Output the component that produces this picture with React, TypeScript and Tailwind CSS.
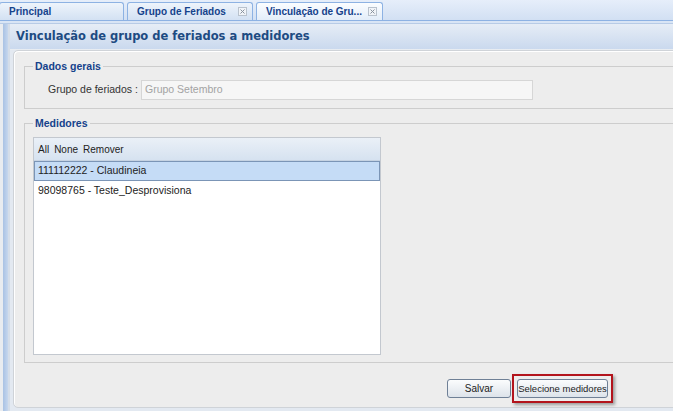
import React from "react";

function CloseIcon() {
  return (
    <svg width="9" height="9" viewBox="0 0 9 9" className="shrink-0">
      <rect x="0.5" y="0.5" width="8" height="8" fill="#f1f4f8" stroke="#b9c2cd" />
      <path d="M2.5 2.5 L6.5 6.5 M6.5 2.5 L2.5 6.5" stroke="#8a939e" strokeWidth="1" />
    </svg>
  );
}

function Tab({ label, width, active, closable }: { label: string; width: string; active?: boolean; closable?: boolean }) {
  return (
    <div
      className={
        "h-[18px] flex items-center pl-[9px] pr-[5px] rounded-t-[3px] border border-b-0 border-[#8db2e3] " +
        width +
        (active
          ? " bg-gradient-to-b from-[#fbfdff] to-[#e3edf9]"
          : " bg-gradient-to-b from-[#eef4fb] to-[#d3e1f3]")
      }
    >
      <span className="flex-1 text-[10px] font-bold text-[#15428b] whitespace-nowrap">{label}</span>
      {closable && <CloseIcon />}
    </div>
  );
}

export default function App() {
  return (
    <div className="w-[673px] h-[411px] overflow-hidden bg-[#dfe8f6] font-['Liberation_Sans',Arial,sans-serif] text-[#222]">
      {/* Tab strip */}
      <div className="h-[21px] flex items-end gap-[3px] bg-gradient-to-b from-[#e6eefa] to-[#d2e0f3] border-b border-[#8db2e3]">
        <Tab label="Principal" width="w-[125px] -ml-px" />
        <Tab label="Grupo de Feriados" width="w-[126px]" closable />
        <Tab label="Vinculação de Gru..." width="w-[127px]" active closable />
      </div>
      <div className="h-[3px] bg-[#d9e5f5] border-b border-[#b7cbe6]" />

      <div className="flex h-[387px]">
        {/* left strip */}
        <div className="w-[3px] bg-[#e9ecf0]" />
        <div className="w-[5px] bg-gradient-to-r from-[#a9c2e4] to-[#c6d7ee]" />
        <div className="w-[2px] bg-[#d4dde9]" />

        <div className="flex-1 flex flex-col min-w-0">
          {/* header */}
          <div className="h-[26px] shrink-0 flex items-center pl-[6px] bg-gradient-to-b from-[#e6edf6] to-[#cad9ee] border-b border-[#e8ecf1]">
            <span className="font-['DejaVu_Sans',Verdana,sans-serif] font-bold text-[11.5px] text-[#1d4b82] whitespace-nowrap">
              Vinculação de grupo de feriados a medidores
            </span>
          </div>

          <div className="flex-1 pl-[3px] bg-[#e3e9f1]">
            <div className="w-[710px] h-[358px] bg-[#ededed] border border-[#cfd3d8] rounded-tl-[5px] rounded-bl-[5px] shadow-[inset_1px_1px_0_#ffffff] pt-[9px] pl-[10px] flex flex-col">
              {/* Dados gerais */}
              <fieldset className="w-[690px] border border-[#cdcdcd] px-[8px] pb-[8px]">
                <legend className="px-[2px] text-[10.5px] leading-[12px] font-bold text-[#15428b]">Dados gerais</legend>
                <div className="flex items-center pt-[8px] pl-[15px]">
                  <span className="text-[10.5px] text-[#333] w-[93px] whitespace-nowrap">Grupo de feriados :</span>
                  <div className="w-[392px] h-[20px] bg-[#f6f6f6] border border-[#d6d6d6] flex items-center pl-[3px]">
                    <span className="text-[10.5px] text-[#a3a3a3]">Grupo Setembro</span>
                  </div>
                </div>
              </fieldset>

              {/* Medidores */}
              <fieldset className="w-[690px] mt-[8px] border border-[#cdcdcd] px-[8px] pb-[7px]">
                <legend className="px-[2px] text-[10.5px] leading-[12px] font-bold text-[#15428b]">Medidores</legend>
                <div className="mt-[8px] w-[348px] h-[218px] bg-white border border-[#c3c8cf] flex flex-col">
                  <div className="h-[23px] flex items-center gap-[5px] pl-[4px] bg-gradient-to-b from-[#eaf0f7] to-[#d6e2f0] border-b border-[#c6d3e2]">
                    <span className="text-[10px] text-[#222]">All</span>
                    <span className="text-[10px] text-[#222]">None</span>
                    <span className="text-[10px] text-[#222]">Remover</span>
                  </div>
                  <div className="h-[20px] flex items-center pl-[3px] bg-[#c5dcf6] border border-[#7b95b6]">
                    <span className="text-[10.5px] text-[#222]">111112222 - Claudineia</span>
                  </div>
                  <div className="h-[19px] flex items-center pl-[4px]">
                    <span className="text-[10.5px] text-[#222]">98098765 - Teste_Desprovisiona</span>
                  </div>
                </div>
              </fieldset>

              {/* Buttons */}
              <div className="mt-[11px] flex items-center pl-[423px] gap-[1px]">
                <button className="w-[64px] h-[19px] rounded-[3px] border border-[#6f8096] bg-gradient-to-b from-[#fbfcfd] to-[#dde3ea] text-[10px] leading-[17px] text-[#222]">
                  Salvar
                </button>
                <div className="border-2 border-[#b3141c] p-[3px] shadow-[2px_2px_3px_rgba(0,0,0,0.35)]">
                  <button className="block w-[91px] h-[19px] rounded-[3px] border border-[#6f8096] bg-gradient-to-b from-[#fbfcfd] to-[#dde3ea] text-[9.5px] leading-[17px] text-[#222] whitespace-nowrap">
                    Selecione medidores
                  </button>
                </div>
              </div>
            </div>
          </div>
        </div>
      </div>
    </div>
  );
}
